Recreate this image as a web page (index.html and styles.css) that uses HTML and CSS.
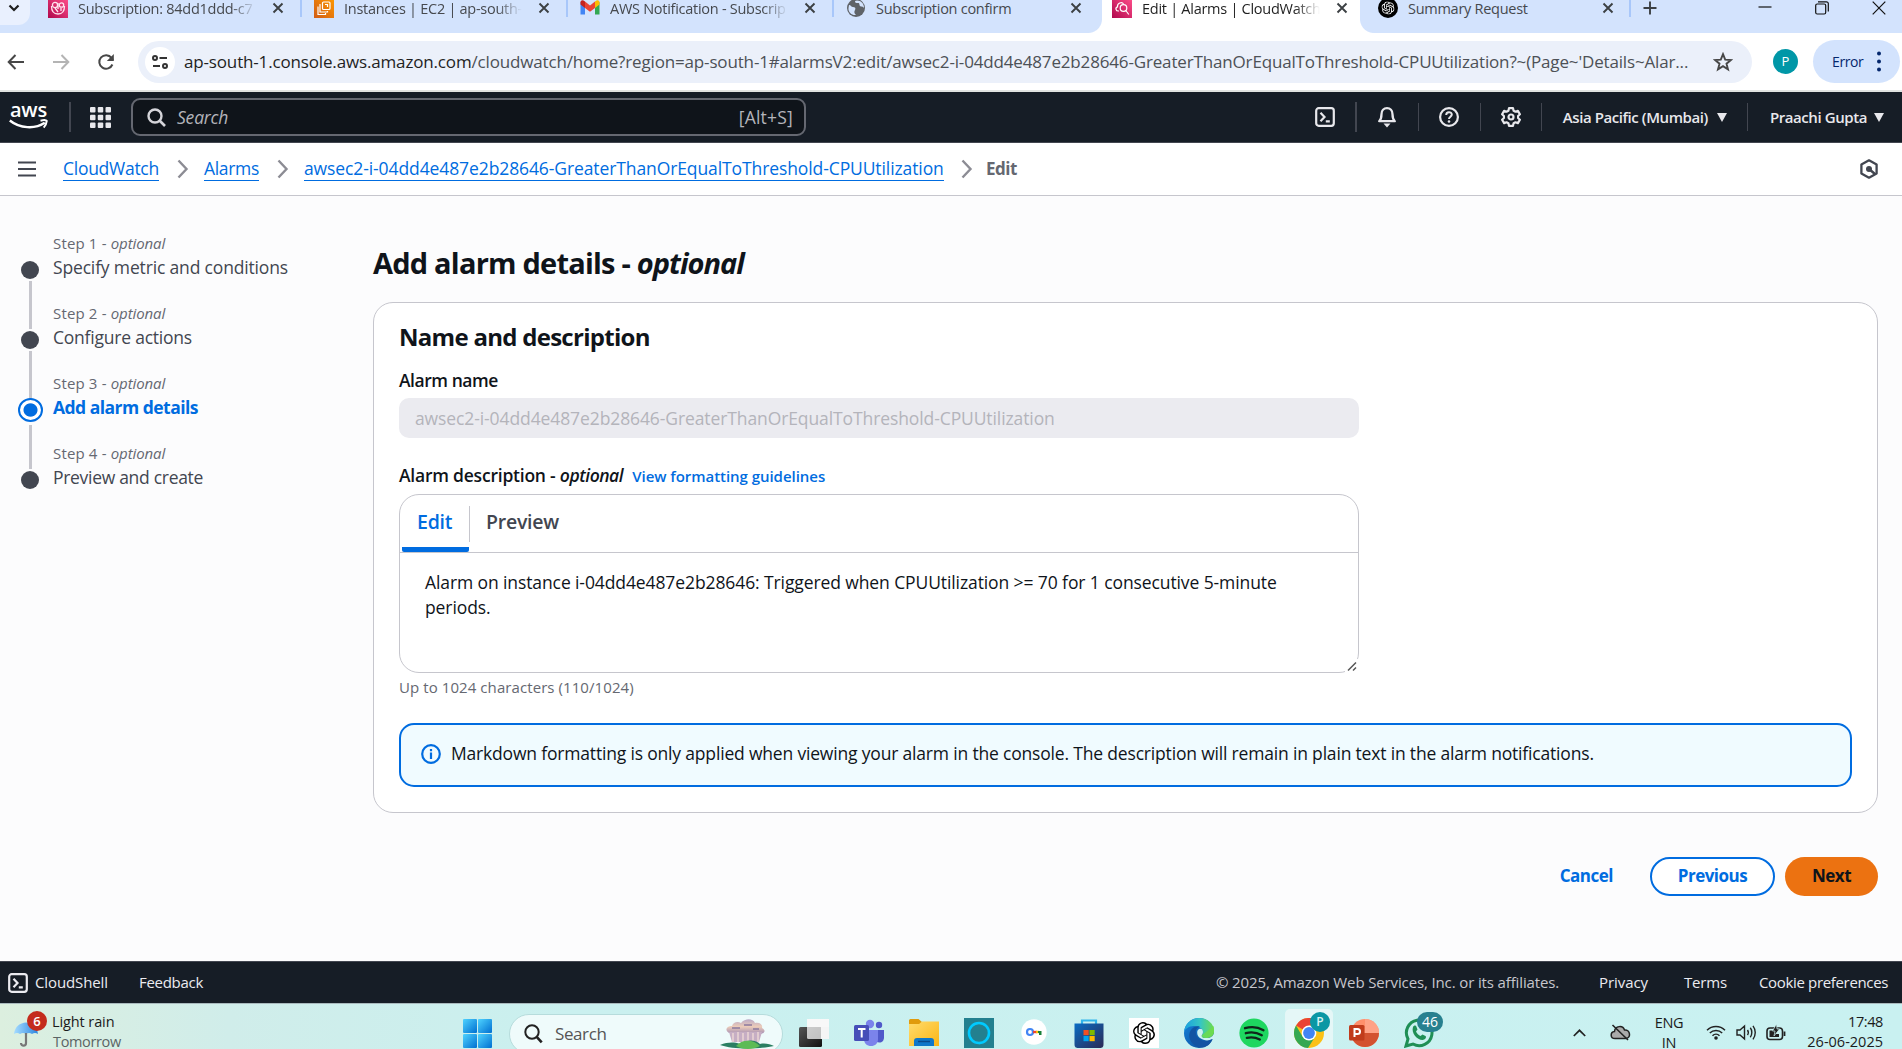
FILE: index.html
```
<!DOCTYPE html>
<html lang="en">
<head>
<meta charset="utf-8">
<title>Edit | Alarms | CloudWatch</title>
<link rel="stylesheet" href="styles.css">
</head>
<body>
<svg width="0" height="0" class="defs" aria-hidden="true">
  <defs>
    <symbol id="x" viewBox="0 0 12 12"><path d="M1.5 1.5l9 9M10.500 1.500l-9 9" fill="none" stroke="currentColor" stroke-width="1.900"/></symbol>
    <symbol id="knot" viewBox="0 0 24 24"><path fill="currentColor" d="M22.280 9.820a5.980 5.980 0 0 0-.52-4.910 6.050 6.050 0 0 0-6.510-2.900A6.070 6.070 0 0 0 4.980 4.180a5.980 5.980 0 0 0-4 2.900 6.050 6.050 0 0 0 .74 7.100 5.980 5.980 0 0 0 .51 4.910 6.050 6.050 0 0 0 6.520 2.900A5.980 5.980 0 0 0 13.260 24a6.060 6.060 0 0 0 5.770-4.210 5.990 5.990 0 0 0 4-2.900 6.060 6.060 0 0 0-.75-7.070zm-9.020 12.610a4.480 4.480 0 0 1-2.880-1.040l.14-.08 4.780-2.760a.8.8 0 0 0 .39-.68v-6.740l2.020 1.170a.07.07 0 0 1 .04.05v5.580a4.500 4.500 0 0 1-4.490 4.500zM3.600 18.300a4.470 4.470 0 0 1-.54-3.010l.14.08 4.790 2.760a.77.77 0 0 0 .78 0l5.840-3.370v2.330a.08.08 0 0 1-.03.060L9.740 19.950a4.500 4.500 0 0 1-6.140-1.650zM2.340 7.900a4.490 4.490 0 0 1 2.370-1.970V11.600a.77.77 0 0 0 .39.68l5.810 3.350-2.020 1.170a.08.08 0 0 1-.07 0l-4.830-2.790A4.500 4.500 0 0 1 2.340 7.870zm16.600 3.860l-5.840-3.390L15.120 7.200a.08.08 0 0 1 .07 0l4.830 2.790a4.490 4.490 0 0 1-.68 8.100v-5.680a.79.79 0 0 0-.4-.650zm2.010-3.020l-.14-.09-4.770-2.780a.78.78 0 0 0-.79 0L9.410 9.230V6.900a.07.07 0 0 1 .03-.06l4.830-2.790a4.500 4.500 0 0 1 6.680 4.660zM8.310 12.860l-2.020-1.160a.08.08 0 0 1-.04-.06V6.070a4.500 4.500 0 0 1 7.380-3.450l-.14.08-4.780 2.760a.8.8 0 0 0-.39.680zm1.100-2.360l2.600-1.500 2.610 1.500v3l-2.600 1.500-2.610-1.500z"/></symbol>
    <symbol id="shell" viewBox="0 0 20 20"><rect x="1.200" y="1.200" width="17.600" height="17.600" rx="2.500" fill="none" stroke="currentColor" stroke-width="2.200"/><path d="M5.500 5.800L9.500 10l-4 4.200M10.800 14.300h4" fill="none" stroke="currentColor" stroke-width="2.200"/></symbol>
    <symbol id="chev" viewBox="0 0 12 20"><path d="M1.500 1.500L9.500 10l-8 8.500" fill="none" stroke="#8c8c94" stroke-width="2.400"/></symbol>
    <linearGradient id="pink" x1="0" y1="1" x2="1" y2="0"><stop stop-color="#b0084d"/><stop offset="1" stop-color="#ff4f8b"/></linearGradient>
    <linearGradient id="orange" x1="0" y1="1" x2="1" y2="0"><stop stop-color="#d05c17"/><stop offset="1" stop-color="#f90"/></linearGradient>
    <linearGradient id="win" x1="0" y1="0" x2="1" y2="1"><stop stop-color="#4fd3ff"/><stop offset="1" stop-color="#006fd1"/></linearGradient>
    <linearGradient id="brolly" x1="0" y1="0" x2="1" y2="0"><stop stop-color="#a6dcff"/><stop offset="1" stop-color="#2c86e0"/></linearGradient>
    <linearGradient id="folder" x1="0" y1="0" x2="1" y2="1"><stop stop-color="#ffdc6e"/><stop offset="1" stop-color="#fbb514"/></linearGradient>
    <linearGradient id="store" x1="0" y1="0" x2="1" y2="1"><stop stop-color="#0a6cc4"/><stop offset="1" stop-color="#2b2a55"/></linearGradient>
    <linearGradient id="dark" x1="0" y1="0" x2="1" y2="1"><stop stop-color="#555"/><stop offset="1" stop-color="#111"/></linearGradient>
    <linearGradient id="edgeTop" x1="0" y1="0" x2="1" y2="0"><stop stop-color="#1ba0e0"/><stop offset=".55" stop-color="#36c6c2"/><stop offset="1" stop-color="#6edc4b"/></linearGradient>
    <linearGradient id="edgeLow" x1="0" y1="0" x2="1" y2="1"><stop stop-color="#1583dc"/><stop offset="1" stop-color="#0b4a97"/></linearGradient>
    <linearGradient id="cloudy" x1="0" y1="0" x2="0" y2="1"><stop stop-color="#b9a9c6"/><stop offset=".5" stop-color="#ecccb9"/><stop offset="1" stop-color="#a58fb4"/></linearGradient>
  </defs>
</svg>

<header class="tabs">
  <div class="tab-list-btn"><svg width="12" height="8" viewBox="0 0 12 8"><path d="M1.500 1.500L6 6l4.500-4.500" fill="none" stroke="#1f1f1f" stroke-width="2.200"/></svg></div>
  <div class="tab first">
    <svg class="fav" viewBox="0 0 20 20"><rect width="20" height="20" fill="url(#pink)"/><g fill="none" stroke="#ffe3ee" stroke-width="1.300"><circle cx="7" cy="7" r="2.600"/><circle cx="13.500" cy="7" r="2.200"/><path d="M3.500 8c0 5 2 8 6.500 8s6.500-3 6.500-8M7 10l3 4M13 10v3M10 5v6"/></g></svg>
    <span class="tab-title fade">Subscription: 84dd1ddd-c7</span><svg class="close"><use href="#x"/></svg>
  </div>
  <i class="tab-sep"></i>
  <div class="tab">
    <svg class="fav" viewBox="0 0 20 20"><rect width="20" height="20" fill="url(#orange)"/><g fill="none" stroke="#fff" stroke-width="1.200"><rect x="8.500" y="4" width="7.500" height="7.500" rx="1"/><path d="M6.500 6.500h-.5v7.500h7.500v-1M4.500 9H4v7.500h7.500V15M11 6.500h2.500V9"/></g></svg>
    <span class="tab-title fade">Instances | EC2 | ap-south-</span><svg class="close"><use href="#x"/></svg>
  </div>
  <i class="tab-sep"></i>
  <div class="tab">
    <svg class="fav" viewBox="0 0 20 20"><path d="M.5 4v12.500H5V8z" fill="#4285f4"/><path d="M19.500 4v12.500H15V8z" fill="#34a853"/><path d="M15 3.500l1.500-1c1.500-.8 3 .2 3 1.800v2.200L15 10z" fill="#fbbc04"/><path d="M5 3.500l-1.500-1c-1.500-.8-3 .2-3 1.800v2.200L5 10z" fill="#c5221f"/><path d="M5 3.500l5 4 5-4V10l-5 3.800L5 10z" fill="#ea4335"/></svg>
    <span class="tab-title fade">AWS Notification - Subscrip</span><svg class="close"><use href="#x"/></svg>
  </div>
  <i class="tab-sep"></i>
  <div class="tab before-active">
    <svg class="fav" viewBox="0 0 20 20"><circle cx="10" cy="10" r="9" fill="#5f6368"/><path d="M3 7c2 0 2 2 4 2s3 1 2 3-1 3 1 5c-4 .5-8-2.500-7.500-7zM9 3c0 2 1 2 3 2s1 2 2 3 3 0 4 2c.3-4-3-7.500-7-7.500z" fill="#d3e3fd"/></svg>
    <span class="tab-title">Subscription confirm</span><svg class="close"><use href="#x"/></svg>
  </div>
  <div class="tab active">
    <svg class="fav" viewBox="0 0 20 20"><rect width="20" height="20" fill="url(#pink)"/><g fill="none" stroke="#fff" stroke-width="1.200"><circle cx="11.500" cy="10" r="3.300"/><path d="M13.800 12.500l3 4M7 13c-3.500.3-4-3.500-1.500-4.200C5 5 10 3.500 11.500 6"/></g></svg>
    <span class="tab-title fade">Edit | Alarms | CloudWatch</span><svg class="close"><use href="#x"/></svg>
  </div>
  <div class="tab last">
    <svg class="fav" viewBox="0 0 20 20"><circle cx="10" cy="10" r="10" fill="#000"/><use href="#knot" x="3.500" y="3.500" width="13" height="13" color="#fff"/></svg>
    <span class="tab-title">Summary Request</span><svg class="close"><use href="#x"/></svg>
  </div>
  <i class="tab-sep"></i>
  <svg class="plus" width="14" height="14" viewBox="0 0 14 14"><path d="M7 .5v13M.5 7h13" stroke="#3c4043" stroke-width="1.900"/></svg>
  <div class="win-btns">
    <svg width="14" height="14" viewBox="0 0 14 14"><path d="M.5 6h13" stroke="#111" stroke-width="1.200"/></svg>
    <svg width="14" height="14" viewBox="0 0 14 14"><rect x=".7" y="3" width="10" height="10" rx="1.500" fill="none" stroke="#111" stroke-width="1.200"/><path d="M3 .8h8.500a1.800 1.800 0 0 1 1.800 1.800v8" fill="none" stroke="#111" stroke-width="1.200"/></svg>
    <svg width="14" height="14" viewBox="0 0 14 14"><path d="M.7.7l12.600 12.600M13.300.7L.7 13.300" stroke="#111" stroke-width="1.200"/></svg>
  </div>
</header>

<div class="toolbar">
  <svg class="nav-i" width="18" height="18" viewBox="0 0 18 18"><path d="M17 9H2M8.500 2L1.700 9l6.800 7" fill="none" stroke="#474747" stroke-width="2"/></svg>
  <svg class="nav-i" width="18" height="18" viewBox="0 0 18 18"><path d="M1 9h15M9.500 2l6.800 7-6.800 7" fill="none" stroke="#b4b4b4" stroke-width="2"/></svg>
  <svg class="nav-i" width="18" height="18" viewBox="0 0 18 18"><path d="M15.400 11.500A6.800 6.800 0 1 1 14.500 4.800L16 7" fill="none" stroke="#474747" stroke-width="2"/><path d="M16.800 1v7h-7z" fill="#474747"/></svg>
  <div class="omnibox">
    <span class="site"><svg width="16" height="16" viewBox="0 0 16 16"><g fill="none" stroke="#333" stroke-width="2"><circle cx="3" cy="4" r="2"/><path d="M7.500 4H15M1 12h7"/><circle cx="13" cy="12" r="2"/></g></svg></span>
    <span class="url"><b>ap-south-1.console.aws.amazon.com</b>/cloudwatch/home?region=ap-south-1#alarmsV2:edit/awsec2-i-04dd4e487e2b28646-GreaterThanOrEqualToThreshold-CPUUtilization?~(Page~'Details~Alar...</span>
    <svg class="star" width="20" height="20" viewBox="0 0 20 20"><path d="M10 2.200l2.200 5.400 5.800.4-4.500 3.700 1.500 5.700-5-3.200-5 3.200 1.500-5.700L2 8l5.800-.4z" fill="none" stroke="#474747" stroke-width="1.900"/></svg>
  </div>
  <span class="avatar">P</span>
  <span class="error"><span>Error</span><svg width="4" height="21" viewBox="0 0 4 21"><g fill="#04276d"><circle cx="2" cy="2.500" r="2"/><circle cx="2" cy="10.500" r="2"/><circle cx="2" cy="18.500" r="2"/></g></svg></span>
</div>

<nav class="aws">
  <div class="logo"><span>aws</span><svg width="39" height="11" viewBox="0 0 39 11"><path d="M.8 1.500c10 8 25 9 35 2.300" fill="none" stroke="#fff" stroke-width="2.400"/><path d="M31.500 1.700c4-1 6.500-.6 6.200.4-.2 2-1 4.500-3 6.500" fill="none" stroke="#fff" stroke-width="2"/></svg></div>
  <i class="v strong"></i>
  <svg class="apps" width="21" height="21" viewBox="0 0 21 21"><g fill="#e8e8ec"><rect width="5.500" height="5.500" rx="1"/><rect x="7.750" width="5.500" height="5.500" rx="1"/><rect x="15.500" width="5.500" height="5.500" rx="1"/><rect y="7.750" width="5.500" height="5.500" rx="1"/><rect x="7.750" y="7.750" width="5.500" height="5.500" rx="1"/><rect x="15.500" y="7.750" width="5.500" height="5.500" rx="1"/><rect y="15.500" width="5.500" height="5.500" rx="1"/><rect x="7.750" y="15.500" width="5.500" height="5.500" rx="1"/><rect x="15.500" y="15.500" width="5.500" height="5.500" rx="1"/></g></svg>
  <div class="search"><svg width="19" height="19" viewBox="0 0 19 19"><circle cx="8" cy="8" r="6.500" fill="none" stroke="#d5d5da" stroke-width="2.400"/><path d="M12.500 12.500l5.500 5.500" stroke="#d5d5da" stroke-width="2.600"/></svg><em>Search</em><span>[Alt+S]</span></div>
  <div class="tools">
    <svg width="20" height="20"><use href="#shell"/></svg><i class="v strong"></i>
    <svg width="20" height="22" viewBox="0 0 20 22"><path d="M2.200 15.200c2-2 2.300-4 2.300-7 0-3.500 2.300-6 5.500-6s5.500 2.500 5.500 6c0 3 .3 5 2.300 7z" fill="none" stroke="#e8e8ec" stroke-width="2.300" stroke-linejoin="round"/><path d="M6.500 17.500h7L10 21.500z" fill="#e8e8ec"/></svg><i class="v wide"></i>
    <svg width="20" height="20" viewBox="0 0 20 20"><circle cx="10" cy="10" r="8.900" fill="none" stroke="#e8e8ec" stroke-width="2.200"/><path d="M7.200 8c0-3.800 5.600-3.600 5.600-.4 0 2-2.800 2.200-2.800 4.400" fill="none" stroke="#e8e8ec" stroke-width="2"/><circle cx="10" cy="14.500" r="1.300" fill="#e8e8ec"/></svg><i class="v wide"></i>
    <svg width="20" height="20" viewBox="0 0 20 20"><path d="M8 1.200h4l.6 2.500 1.900 1 2.400-.8 2 3.400-1.800 1.700v2l1.800 1.700-2 3.400-2.400-.8-1.900 1-.6 2.500H8l-.6-2.500-1.900-1-2.400.8-2-3.400L2.900 11V9L1.100 7.300l2-3.400 2.400.8 1.900-1z" fill="none" stroke="#e8e8ec" stroke-width="2.200" stroke-linejoin="round"/><circle cx="10" cy="10" r="2.500" fill="none" stroke="#e8e8ec" stroke-width="2.200"/></svg><i class="v"></i>
    <span class="menu region"><span>Asia Pacific (Mumbai)</span><i class="caret"></i></span><i class="v"></i>
    <span class="menu user"><span>Praachi Gupta</span><i class="caret"></i></span>
  </div>
</nav>

<div class="crumbs">
  <svg width="18" height="16" viewBox="0 0 18 16"><path d="M0 1.500h18M0 8h18M0 14.500h18" stroke="#424650" stroke-width="2.200"/></svg>
  <a class="c1">CloudWatch</a><svg class="chev"><use href="#chev"/></svg>
  <a class="c2">Alarms</a><svg class="chev"><use href="#chev"/></svg>
  <a class="c3">awsec2-i-04dd4e487e2b28646-GreaterThanOrEqualToThreshold-CPUUtilization</a><svg class="chev"><use href="#chev"/></svg>
  <strong>Edit</strong>
  <svg class="hex" width="18" height="20" viewBox="0 0 18 20"><path d="M9 1.300l7.600 4.300v8.800L9 18.700l-7.600-4.300V5.600z" fill="none" stroke="#424650" stroke-width="2.300" stroke-linejoin="round"/><circle cx="9" cy="10" r="3" fill="#424650"/><path d="M9 10l6 5" stroke="#424650" stroke-width="2.400"/></svg>
</div>

<main>
  <ol class="steps">
    <li><span class="mark"><i class="dot"></i><i class="line"></i></span><div><small>Step 1 - <em>optional</em></small><p class="s1">Specify metric and conditions</p></div></li>
    <li><span class="mark"><i class="dot"></i><i class="line"></i></span><div><small>Step 2 - <em>optional</em></small><p class="s2">Configure actions</p></div></li>
    <li class="now"><span class="mark"><i class="dot"></i><i class="line"></i></span><div><small>Step 3 - <em>optional</em></small><p class="s3">Add alarm details</p></div></li>
    <li><span class="mark"><i class="dot"></i></span><div><small>Step 4 - <em>optional</em></small><p class="s4">Preview and create</p></div></li>
  </ol>
  <section class="content">
    <h1>Add alarm details - <em>optional</em></h1>
    <div class="card">
      <h2>Name and description</h2>
      <label class="name">Alarm name</label>
      <div class="input">awsec2-i-04dd4e487e2b28646-GreaterThanOrEqualToThreshold-CPUUtilization</div>
      <div class="desc-label"><label>Alarm description - <em>optional</em></label><a>View formatting guidelines</a></div>
      <div class="editor">
        <div class="etabs"><span class="etab on">Edit</span><i></i><span class="etab">Preview</span></div>
        <div class="etext">Alarm on instance i-04dd4e487e2b28646: Triggered when CPUUtilization &gt;= 70 for 1 consecutive 5-minute<br>periods.</div>
        <svg class="grip" width="14" height="14" viewBox="0 0 14 14"><path d="M3 11.500L11 3.500M8 11.500l3-3" stroke="#555" stroke-width="1.500" fill="none"/></svg>
      </div>
      <div class="hint">Up to 1024 characters (110/1024)</div>
      <div class="alert"><svg width="20" height="20" viewBox="0 0 20 20"><circle cx="10" cy="10" r="8.800" fill="none" stroke="#006ce0" stroke-width="2.200"/><path d="M10 8.500V15M10 5v2.200" stroke="#006ce0" stroke-width="2.200"/></svg><span>Markdown formatting is only applied when viewing your alarm in the console. The description will remain in plain text in the alarm notifications.</span></div>
    </div>
    <div class="actions"><a class="cancel">Cancel</a><a class="prev">Previous</a><a class="next">Next</a></div>
  </section>
</main>

<footer>
  <svg width="20" height="20"><use href="#shell"/></svg><span class="f1">CloudShell</span><span class="f2">Feedback</span>
  <span class="copy">© 2025, Amazon Web Services, Inc. or its affiliates.</span><span class="f3">Privacy</span><span class="f4">Terms</span><span class="f5">Cookie preferences</span>
</footer>

<div class="taskbar">
  <div class="weather">
    <svg width="26" height="26" viewBox="0 0 26 26"><path d="M1 13C2 5 7 2 13 1.500 19 2 24 5 25 13c-2-1.500-4-1.500-6 0-2-1.500-4-1.500-6 0-2-1.500-4-1.500-6 0-2-1.500-4-1.500-6 0z" fill="url(#brolly)"/><path d="M13 12v10c0 3.500-5 3.500-5 0" fill="none" stroke="#777" stroke-width="2.200"/></svg>
    <b>6</b>
    <div><span class="w1">Light rain</span><span class="w2">Tomorrow</span></div>
  </div>
  <svg class="start" width="29" height="29" viewBox="0 0 29 29"><rect width="14" height="14" rx="1" fill="url(#win)"/><rect x="15" width="14" height="14" rx="1" fill="url(#win)"/><rect y="15" width="14" height="14" rx="1" fill="url(#win)"/><rect x="15" y="15" width="14" height="14" rx="1" fill="url(#win)"/></svg>
  <div class="tsearch">
    <svg width="19" height="20" viewBox="0 0 19 20"><circle cx="8" cy="8" r="6.700" fill="none" stroke="#222" stroke-width="2"/><path d="M12.700 12.800l5 5.600" stroke="#222" stroke-width="2.600"/></svg><span>Search</span>
    <svg class="storm" width="54" height="31" viewBox="0 0 54 31"><path d="M9 14c-5-3-2-7 3-7 1-4 6-5 9-3 4-5 12-5 14 0 5-1 8 2 7 5 4 2 3 5-1 6z" fill="url(#cloudy)"/><path d="M9 13h33l-3 10H12z" fill="#c6aec4"/><path d="M13 14v9M18 13v10M23 14v9M28 13v10M33 14v9M38 13v10" stroke="#ecd6d4" stroke-width="1.500"/><path d="M12 9h8M24 6h8M33 10h6" stroke="#8b7a9f" stroke-width="1.500"/><path d="M0 26c8-3 14-3 20-1 8-5 16-4 20 0 5-1 10 0 14 2-14 3-40 4-54-1z" fill="#2b7f62"/><path d="M16 27c6-7 17-7 24 0-7 4-17 4-24 0z" fill="#5dbb55"/></svg>
  </div>
  <div class="apps-row">
    <svg viewBox="0 0 30 30"><rect y="8" width="23" height="20" rx="1.500" fill="url(#dark)"/><rect x="8" width="22" height="20" rx="1.500" fill="#fff" opacity=".72"/><rect x="22" width="8" height="20" fill="#f5f5f5"/><path d="M8 0h22v8H8z" fill="#f8f8f8"/></svg>
    <svg viewBox="0 0 30 30"><circle cx="16" cy="5" r="4.200" fill="#7b83eb"/><circle cx="25" cy="6" r="3.200" fill="#5059c9"/><path d="M21 11h9v7.500c0 3-2 5-4.500 5S21 22 21 19z" fill="#5059c9"/><path d="M10 11h14v9c0 4.500-3 7-7 7s-7-2.500-7-7z" fill="#7b83eb"/><rect y="6" width="15" height="16" rx="1.500" fill="#464eb8"/><path d="M4 10h7.500M7.700 10v8.500" stroke="#fff" stroke-width="2"/></svg>
    <svg viewBox="0 0 30 30"><path d="M0 1.500C0 .8.700 0 1.500 0h8L13 3h14c2 0 3 1 3 2v20H0z" fill="#e09b0c"/><path d="M0 5h10l3-2.500h17V27H0z" fill="url(#folder)"/><path d="M5 27v-5c0-2 1-3 3-3h14c2 0 3 1 3 3v5z" fill="#0f78c9"/><path d="M9 22.500h12" stroke="#0a4a8a" stroke-width="1.500"/></svg>
    <svg viewBox="0 0 30 30"><rect width="30" height="30" fill="#23808f"/><circle cx="15" cy="15" r="10" fill="none" stroke="#00caff" stroke-width="2.600"/><path d="M12 24l4 2.500 1-2z" fill="#00caff"/></svg>
    <svg viewBox="0 0 30 30"><circle cx="15" cy="14" r="12.700" fill="#fff"/><circle cx="11" cy="14" r="3" fill="none" stroke="#4285f4" stroke-width="2.200"/><path d="M14 14h4" stroke="#ea4335" stroke-width="2.400"/><path d="M17 14h3" stroke="#fbbc04" stroke-width="2.400"/><path d="M19 13h3.500v4H20v-2h-1z" fill="#188038"/></svg>
    <svg viewBox="0 0 30 30"><path d="M8 6V2.500h14V6" fill="none" stroke="#31b5ec" stroke-width="2.200"/><path d="M.5 5.500h29V26c0 3-1 4-4 4h-21c-3 0-4-1-4-4z" fill="url(#store)"/><path d="M9.500 12h5.200v5.200H9.500z" fill="#f25022"/><path d="M15.500 12h5.200v5.200h-5.200z" fill="#7fba00"/><path d="M9.500 18h5.200v5.200H9.500z" fill="#00a4ef"/><path d="M15.500 18h5.200v5.200h-5.200z" fill="#ffb900"/></svg>
    <svg viewBox="0 0 30 30"><rect width="30" height="30" fill="#fff"/><use href="#knot" x="4" y="4" width="22" height="22" color="#000"/></svg>
    <svg viewBox="0 0 30 30"><circle cx="15" cy="15" r="15" fill="url(#edgeLow)"/><path d="M0 14C1 5 8 0 15 0c9 0 15 6 15 13 0 5-4 7-8 7-3 0-5-1-4-3 1-1 1-2 1-3 0-3-4-6-9-6-5 0-9 3-10 6z" fill="url(#edgeTop)"/><path d="M28 22c-3 2-8 2-11 0-4-2-6-6-5-10 1-2 2-3 4-3.500-7-2-13 6-10 13 2 5 7 8.500 13 8 4-.5 8-4 9-7.500z" fill="#1254a3"/><path d="M19 14c0-3-2-4-4-3-3 2-2 7 1 9 4 3 9 3 12 1l2.500.5L30 15c-1 4-5 5.500-8.500 5-3 0-4.500-1.500-3.500-3 .7-1 1-2 1-3z" fill="#cdf2f1"/><path d="M30 13c0 5-4 7-8 7-3 0-5-1-4-3l12-9z" fill="#6edc4b" opacity=".8"/></svg>
    <svg viewBox="0 0 30 30"><circle cx="15" cy="15" r="14.600" fill="#1ed760"/><path d="M6 10.200c6-1.800 13-1.200 18.500 2M6.800 15.200c5-1.400 11-.8 16 2M7.800 19.800c4.500-1 9-.5 13 1.700" fill="none" stroke="#10251a" stroke-width="2.300" stroke-linecap="round"/></svg>
    <span class="chrome"><svg viewBox="0 0 30 30"><circle cx="15" cy="15" r="15" fill="#fbc116"/><path d="M15 15L2 7.500A15 15 0 0 1 28 7.500H15z" fill="#ea4335"/><path d="M2 7.500A15 15 0 0 0 14 30l7.500-12L15 15 8.500 18.500z" fill="#34a853"/><circle cx="15" cy="15" r="7.400" fill="#fff"/><circle cx="15" cy="15" r="5.900" fill="#4285f4"/></svg><b>P</b></span>
    <svg viewBox="0 0 30 30"><circle cx="16" cy="15" r="14" fill="#ff8f6b"/><path d="M16 15h14a14 14 0 0 1-28 0z" fill="#d35230"/><path d="M16 1a14 14 0 0 1 14 14H16z" fill="#ffa286"/><rect y="7" width="15.500" height="15.500" rx="1.500" fill="#c13b1b"/><path d="M5.500 19v-8h3a2.500 2.500 0 0 1 0 5H6" fill="none" stroke="#fff" stroke-width="2"/></svg>
    <span class="wa"><svg viewBox="0 0 30 30"><path d="M2 28l2-7A12.800 12.800 0 1 1 9 26z" fill="none" stroke="#1f8f55" stroke-width="3"/><path d="M9 9c1-2 3-2 3.500 0l1 2.500-1.500 2c1 2 2.500 3.500 4.500 4.500l2-1.500 3 1.500c1.500 1-.5 4-3 4C13 22 7 15 9 9z" fill="#1f8f55"/></svg><b>46</b></span>
  </div>
  <div class="tray">
    <svg class="t1" width="13" height="8" viewBox="0 0 13 8"><path d="M.8 7L6.500 1.300 12.200 7" fill="none" stroke="#222" stroke-width="1.700"/></svg>
    <svg class="t2" width="21" height="17" viewBox="0 0 21 17"><path d="M5 14.500C0 14.500 0 8 4.500 7.500 5 1.500 13 1 14.500 6c6-.5 7 8.500 1 8.500z" fill="#aaa" stroke="#222" stroke-width="1.500"/><path d="M2.500 1l15.500 15" stroke="#222" stroke-width="1.600"/></svg>
    <span class="lang"><span>ENG</span><span>IN</span></span>
    <svg class="t3" width="20" height="16" viewBox="0 0 20 16"><g fill="none" stroke="#222" stroke-width="1.500"><path d="M1 6.200a13 13 0 0 1 18 0M3.800 9a9 9 0 0 1 12.400 0M6.500 11.700a5 5 0 0 1 7 0"/></g><circle cx="10" cy="14" r="1.800" fill="#222"/></svg>
    <svg class="t4" width="21" height="17" viewBox="0 0 21 17"><g fill="none" stroke="#222" stroke-width="1.400"><path d="M1 6v5h3l4.500 4V2L4 6zM11.500 6c1 1.500 1 3.500 0 5M14.300 3.800c2 2.500 2 7 0 9.500M17 1.800c3 4 3 9.500 0 13.500"/></g></svg>
    <svg class="t5" width="20" height="17" viewBox="0 0 20 17"><rect x="1" y="4" width="15.500" height="11.500" rx="3" fill="none" stroke="#222" stroke-width="1.600"/><path d="M18.500 7.500v4.500" stroke="#222" stroke-width="1.800"/><path d="M3.500 6.500H9V10h4v3H3.500z" fill="#222"/><path d="M10.500 0L6.500 7H9l-1 5 5.500-7H11z" fill="#222" stroke="#ccf1f1" stroke-width=".7"/></svg>
    <span class="clock"><span class="hm">17:48</span><span class="dt">26-06-2025</span></span>
  </div>
</div>
</body>
</html>
```
FILE: styles.css
```
* { box-sizing: border-box; }
html, body { margin: 0; height: 100%; overflow: hidden; }
body { display: flex; flex-direction: column; width: 1902px; height: 1049px; background: #fcfcfd; color: #0f141a; font: 400 17.5px/25px "Open Sans", sans-serif; }
svg { display: block; flex: none; }
h1, h2, p, ol { margin: 0; padding: 0; font-weight: 400; }
span, a, label, strong { white-space: nowrap; }
i { flex: none; }
.defs { position: absolute; }

/* browser tabs */
.tabs { flex: none; height: 33px; background: #d3e3fd; display: flex; align-items: flex-start; color: #46494e; font-size: 14.5px; }
.tab-list-btn { width: 30px; height: 25px; background: #e9f0fe; border-radius: 0 0 12px 0; padding: 4px 0 0 8px; flex: none; }
.tab { display: flex; height: 33px; width: 266px; padding-left: 13px; flex: none; }
.tab.first { width: 271px; padding-left: 18px; }
.tab.before-active { width: 269px; }
.tab-sep { width: 2px; height: 17px; background: #a8c7fa; margin-right: -1px; margin-left: -1px; }
.fav { width: 20px; height: 20px; margin-top: -2px; }
.tab-title { width: 178px; height: 24px; line-height: 18px; margin-left: 10px; overflow: hidden; letter-spacing: -.27px; }
.fade { -webkit-mask-image: linear-gradient(90deg, #000 86%, transparent 100%); mask-image: linear-gradient(90deg, #000 86%, transparent 100%); }
.close { width: 12px; height: 12px; margin: 2px 0 0 16px; color: #3c4043; }
.tab.active { background: #fff; color: #1f1f1f; width: 258px; padding-left: 10px; position: relative; }
.tab.active::before, .tab.active::after { content: ""; position: absolute; bottom: 0; width: 14px; height: 14px; }
.tab.active::before { left: -14px; background: radial-gradient(circle at 0 0, #d3e3fd 13.5px, #fff 14.5px); }
.tab.active::after { right: -14px; background: radial-gradient(circle at 100% 0, #d3e3fd 13.5px, #fff 14.5px); }
.tab.last { width: 270px; padding-left: 18px; }
.plus { margin: 1px 0 0 13px; }
.win-btns { margin: 1px 16px 0 auto; display: flex; gap: 43px; }

/* address bar */
.toolbar { flex: none; height: 59px; background: #fff; border-bottom: 2px solid #e1e3e1; display: flex; align-items: center; padding: 0 2px 0 7px; }
.nav-i { margin-right: 27px; }
.omnibox { flex: none; width: 1614px; height: 42px; border-radius: 21px; background: #ebf0fa; display: flex; align-items: center; padding-left: 7px; margin-left: -4px; }
.site { flex: none; width: 30px; height: 30px; border-radius: 50%; background: #fff; display: grid; place-items: center; }
.url { margin-left: 9px; font-size: 17px; letter-spacing: -.157px; color: #4d5156; }
.url b { font-weight: 400; color: #1f1f1f; }
.star { margin: 0 19px 0 auto; }
.avatar { width: 25px; height: 25px; margin-left: 21px; border-radius: 50%; background: #0097a7; color: #fff; font-size: 13px; line-height: 25px; text-align: center; }
.error { width: 87px; height: 43px; margin-left: auto; border-radius: 22px; background: #d3e3fd; color: #04276d; display: flex; align-items: center; gap: 14px; padding-left: 19px; font-size: 14px; letter-spacing: -.4px; }

/* console navigation */
.aws { flex: none; height: 51px; background: #161d26; border-bottom: 1px solid #424650; color: #e8e8ec; display: flex; align-items: center; padding-left: 9px; }
.logo { width: 39px; height: 26px; }
.logo span { display: block; height: 15px; line-height: 12px; font-size: 20px; font-weight: 600; text-align: center; letter-spacing: -.2px; color: #fff; }
.v { width: 1px; height: 28px; background: #424650; }
.v.strong { width: 2px; height: 30px; }
.v.wide { margin-left: 1px; }
.aws > .v { margin-left: 21px; }
.apps { margin-left: 19px; }
.search { width: 675px; height: 38px; margin-left: 20px; border: 2px solid #656871; border-radius: 9px; background: #0f141a; display: flex; align-items: center; padding: 0 11px 0 14px; color: #b4b4bb; }
.search em { margin-left: 11px; letter-spacing: -.2px; }
.search span { margin-left: auto; letter-spacing: .2px; }
.tools { margin-left: auto; height: 50px; display: flex; align-items: center; gap: 20px; padding-right: 18px; }
.menu { display: flex; align-items: center; font-size: 15px; font-weight: 600; letter-spacing: -.42px; }
.region { margin-left: 1px; }
.user { margin-left: 2px; }
.caret { margin-left: 9px; border: 5px solid transparent; border-top: 9px solid #e8e8ec; border-bottom: 0; }
.user .caret { margin-left: 7px; }

/* breadcrumbs */
.crumbs { flex: none; height: 53px; background: #fff; border-bottom: 1px solid #c6c6cd; display: flex; align-items: center; padding: 0 24px 1px 18px; }
.crumbs a { color: #006ce0; line-height: 24px; height: 25px; border-bottom: 1px solid #006ce0; }
.c1 { margin-left: 27px; width: 96px; letter-spacing: -.27px; }
.c2 { width: 55px; letter-spacing: -.32px; }
.c3 { width: 640px; letter-spacing: -.1px; }
.chev { width: 12px; height: 20px; margin: 0 15px 0 18px; }
.c3 + .chev { margin: 0 13px 0 17px; }
.crumbs strong { font-weight: 700; color: #656871; letter-spacing: -.5px; font-size: 17px; }
.hex { margin-left: auto; }

/* page body */
main { flex: 1; display: flex; min-height: 0; }
.steps { list-style: none; width: 373px; padding: 35px 0 0 18px; flex: none; }
.steps li { display: flex; height: 70px; }
.mark { width: 24px; margin-right: 11px; padding-top: 30px; display: flex; flex-direction: column; align-items: center; }
.dot { width: 18px; height: 18px; border-radius: 50%; background: #424650; }
.line { width: 3px; height: 48px; margin-top: 2px; background: #c6c6cd; }
.now .mark { padding-top: 27px; }
.now .dot { width: 25px; height: 24px; border: 2px solid #006ce0; background: radial-gradient(#006ce0 6.5px, #fff 7.5px); }
.now .line { height: 44px; margin-top: 3px; }
.steps small { display: block; font-size: 15px; line-height: 24px; color: #656871; letter-spacing: .16px; }
.steps small em { letter-spacing: -.1px; }
.steps p { color: #424650; white-space: nowrap; line-height: 25px; }
.s1 { letter-spacing: -.16px; } .s2 { letter-spacing: -.22px; } .s4 { letter-spacing: -.3px; }
.steps .s3 { color: #006ce0; font-weight: 700; letter-spacing: -.52px; }
.content { width: 1505px; padding-top: 48px; }
h1 { font-size: 29px; line-height: 38px; font-weight: 700; letter-spacing: -.78px; }
h1 em { letter-spacing: -1px; }
.card { margin-top: 20px; height: 511px; background: #fff; border: 1px solid #c6c6cd; border-radius: 20px; padding: 19px 25px 0; display: flex; flex-direction: column; }
h2 { font-size: 24px; line-height: 30px; font-weight: 700; letter-spacing: -.72px; }
.card label { font-weight: 650; }
.name { margin-top: 16px; letter-spacing: -.45px; }
.input { width: 960px; height: 40px; margin-top: 5px; border-radius: 10px; background: #ebebf0; color: #b4b4bb; line-height: 40px; padding-left: 16px; letter-spacing: -.1px; }
.desc-label { display: flex; align-items: baseline; margin-top: 25px; letter-spacing: -.22px; }
.desc-label em { letter-spacing: -.45px; }
.desc-label a { font-size: 15px; font-weight: 650; color: #006ce0; margin-left: 9px; letter-spacing: -.04px; }
.editor { position: relative; width: 960px; height: 179px; margin-top: 5px; border: 1px solid #c6c6cd; border-radius: 20px; }
.etabs { height: 58px; border-bottom: 1px solid #c6c6cd; display: flex; align-items: flex-start; color: #424650; font-size: 19.5px; font-weight: 650; letter-spacing: -.25px; }
.etab { height: 57px; line-height: 54px; margin-left: 16px; }
.etab.on { margin-left: 2px; width: 67px; padding-left: 15px; color: #006ce0; border-bottom: 5px solid #006ce0; border-radius: 2px; }
.etabs i { width: 1px; height: 36px; margin-top: 11px; background: #c6c6cd; }
.etext { padding: 17px 25px; letter-spacing: -.1px; white-space: nowrap; }
.grip { position: absolute; right: -1px; bottom: -1px; background: #fff; }
.hint { margin-top: 2px; font-size: 15px; line-height: 24px; color: #656871; letter-spacing: .08px; }
.alert { height: 64px; margin-top: 24px; border: 2px solid #006ce0; border-radius: 15px; background: #f0fbff; display: flex; align-items: center; padding: 0 0 4px 20px; gap: 10px; letter-spacing: -.18px; }
.alert svg { position: relative; top: 1px; }
.actions { display: flex; justify-content: flex-end; margin-top: 44px; font-weight: 700; color: #006ce0; }
.actions a { height: 39px; line-height: 37px; text-align: center; letter-spacing: -.5px; font-size: 17px; }
.cancel { margin-right: 37px; }
.prev { width: 125px; border: 2px solid #006ce0; border-radius: 20px; background: #fff; margin-right: 10px; }
.actions .prev { line-height: 33px; }
.next { width: 93px; border-radius: 20px; background: #ec7211; color: #0f141a; }

footer { flex: none; height: 42px; background: #161d26; border-top: 1px solid #424650; display: flex; align-items: center; padding: 0 14px 0 8px; color: #ebebf0; font-size: 15px; font-weight: 500; }
.f1 { margin-left: 7px; width: 73px; letter-spacing: -.11px; }
.f2 { margin-left: 31px; letter-spacing: -.29px; }
.copy { margin-left: auto; width: 343px; font-weight: 400; color: #c6c6cd; letter-spacing: -.13px; }
.f3 { margin-left: 40px; width: 49px; letter-spacing: -.07px; }
.f4 { margin-left: 36px; width: 41px; letter-spacing: -.2px; }
.f5 { margin-left: 34px; width: 129px; letter-spacing: -.34px; }

/* desktop taskbar */
.taskbar { flex: none; height: 46px; overflow: hidden; border-top: 1px solid #a9b9bd; background: linear-gradient(90deg, #dcefdf 0, #d0edea 12%, #caf0ef 30%, #c9f1f1 100%); display: flex; align-items: flex-start; color: #1b1b1b; font-size: 14.5px; }
.weather { position: relative; width: 463px; display: flex; padding: 17px 0 0 13px; flex: none; }
.weather b { position: absolute; left: 27px; top: 7px; width: 20px; height: 20px; border-radius: 50%; background: #c42b1c; color: #fff; font-size: 13px; font-weight: 600; line-height: 20px; text-align: center; }
.weather div { display: flex; flex-direction: column; margin: -9px 0 0 13px; }
.weather span { line-height: 20px; }
.w1 { letter-spacing: -.1px; }
.w2 { color: #5b6464; letter-spacing: -.35px; padding-left: 1px; }
.start { margin-top: 15px; }
.tsearch { width: 274px; height: 40px; margin: 10px 0 0 17px; border: 1px solid #b6dcdc; border-radius: 20px; background: #effbfb; display: flex; align-items: center; padding: 0 8px 0 14px; font-size: 17px; color: #555; }
.tsearch span { margin: 0 0 1px 12px; letter-spacing: -.4px; }
.storm { margin-left: auto; }
.apps-row { display: flex; gap: 25px; margin: 14px 0 0 16px; }
.apps-row svg { width: 30px; height: 30px; }
.apps-row > svg:nth-child(-n+3) { margin-top: 1px; }
.chrome, .wa { position: relative; width: 30px; }
.chrome::before { content: ""; position: absolute; left: -9px; top: -9px; width: 48px; height: 48px; border-radius: 5px; background: #e5f7f7; }
.chrome svg { position: relative; }
.chrome b, .wa b { position: absolute; top: -6px; height: 20px; border-radius: 10px; background: #0a97a4; color: #d8f3f3; font-size: 12px; line-height: 20px; text-align: center; font-weight: 600; }
.chrome b { left: 16px; width: 20px; }
.wa b { left: 13px; width: 26px; background: #27808f; color: #fff; font-size: 14px; font-weight: 400; }
.tray { display: flex; margin: 0 19px 0 auto; line-height: 20px; }
.tray svg { margin-top: 20px; }
.t2 { margin-left: 24px; }
.tray svg.t1 { margin-top: 25px; }
.lang { width: 30px; margin: 9px 0 0 23px; display: flex; flex-direction: column; align-items: center; letter-spacing: -.3px; }
.lang span + span { margin-top: 0; }
.t3 { margin-left: 22px; } .t4 { margin-left: 10px; } .t5 { margin-left: 9px; }
.clock { width: 77px; margin: 8px 0 0 20px; display: flex; flex-direction: column; align-items: flex-end; }
.hm { letter-spacing: -.4px; } .dt { letter-spacing: 0; }
```
